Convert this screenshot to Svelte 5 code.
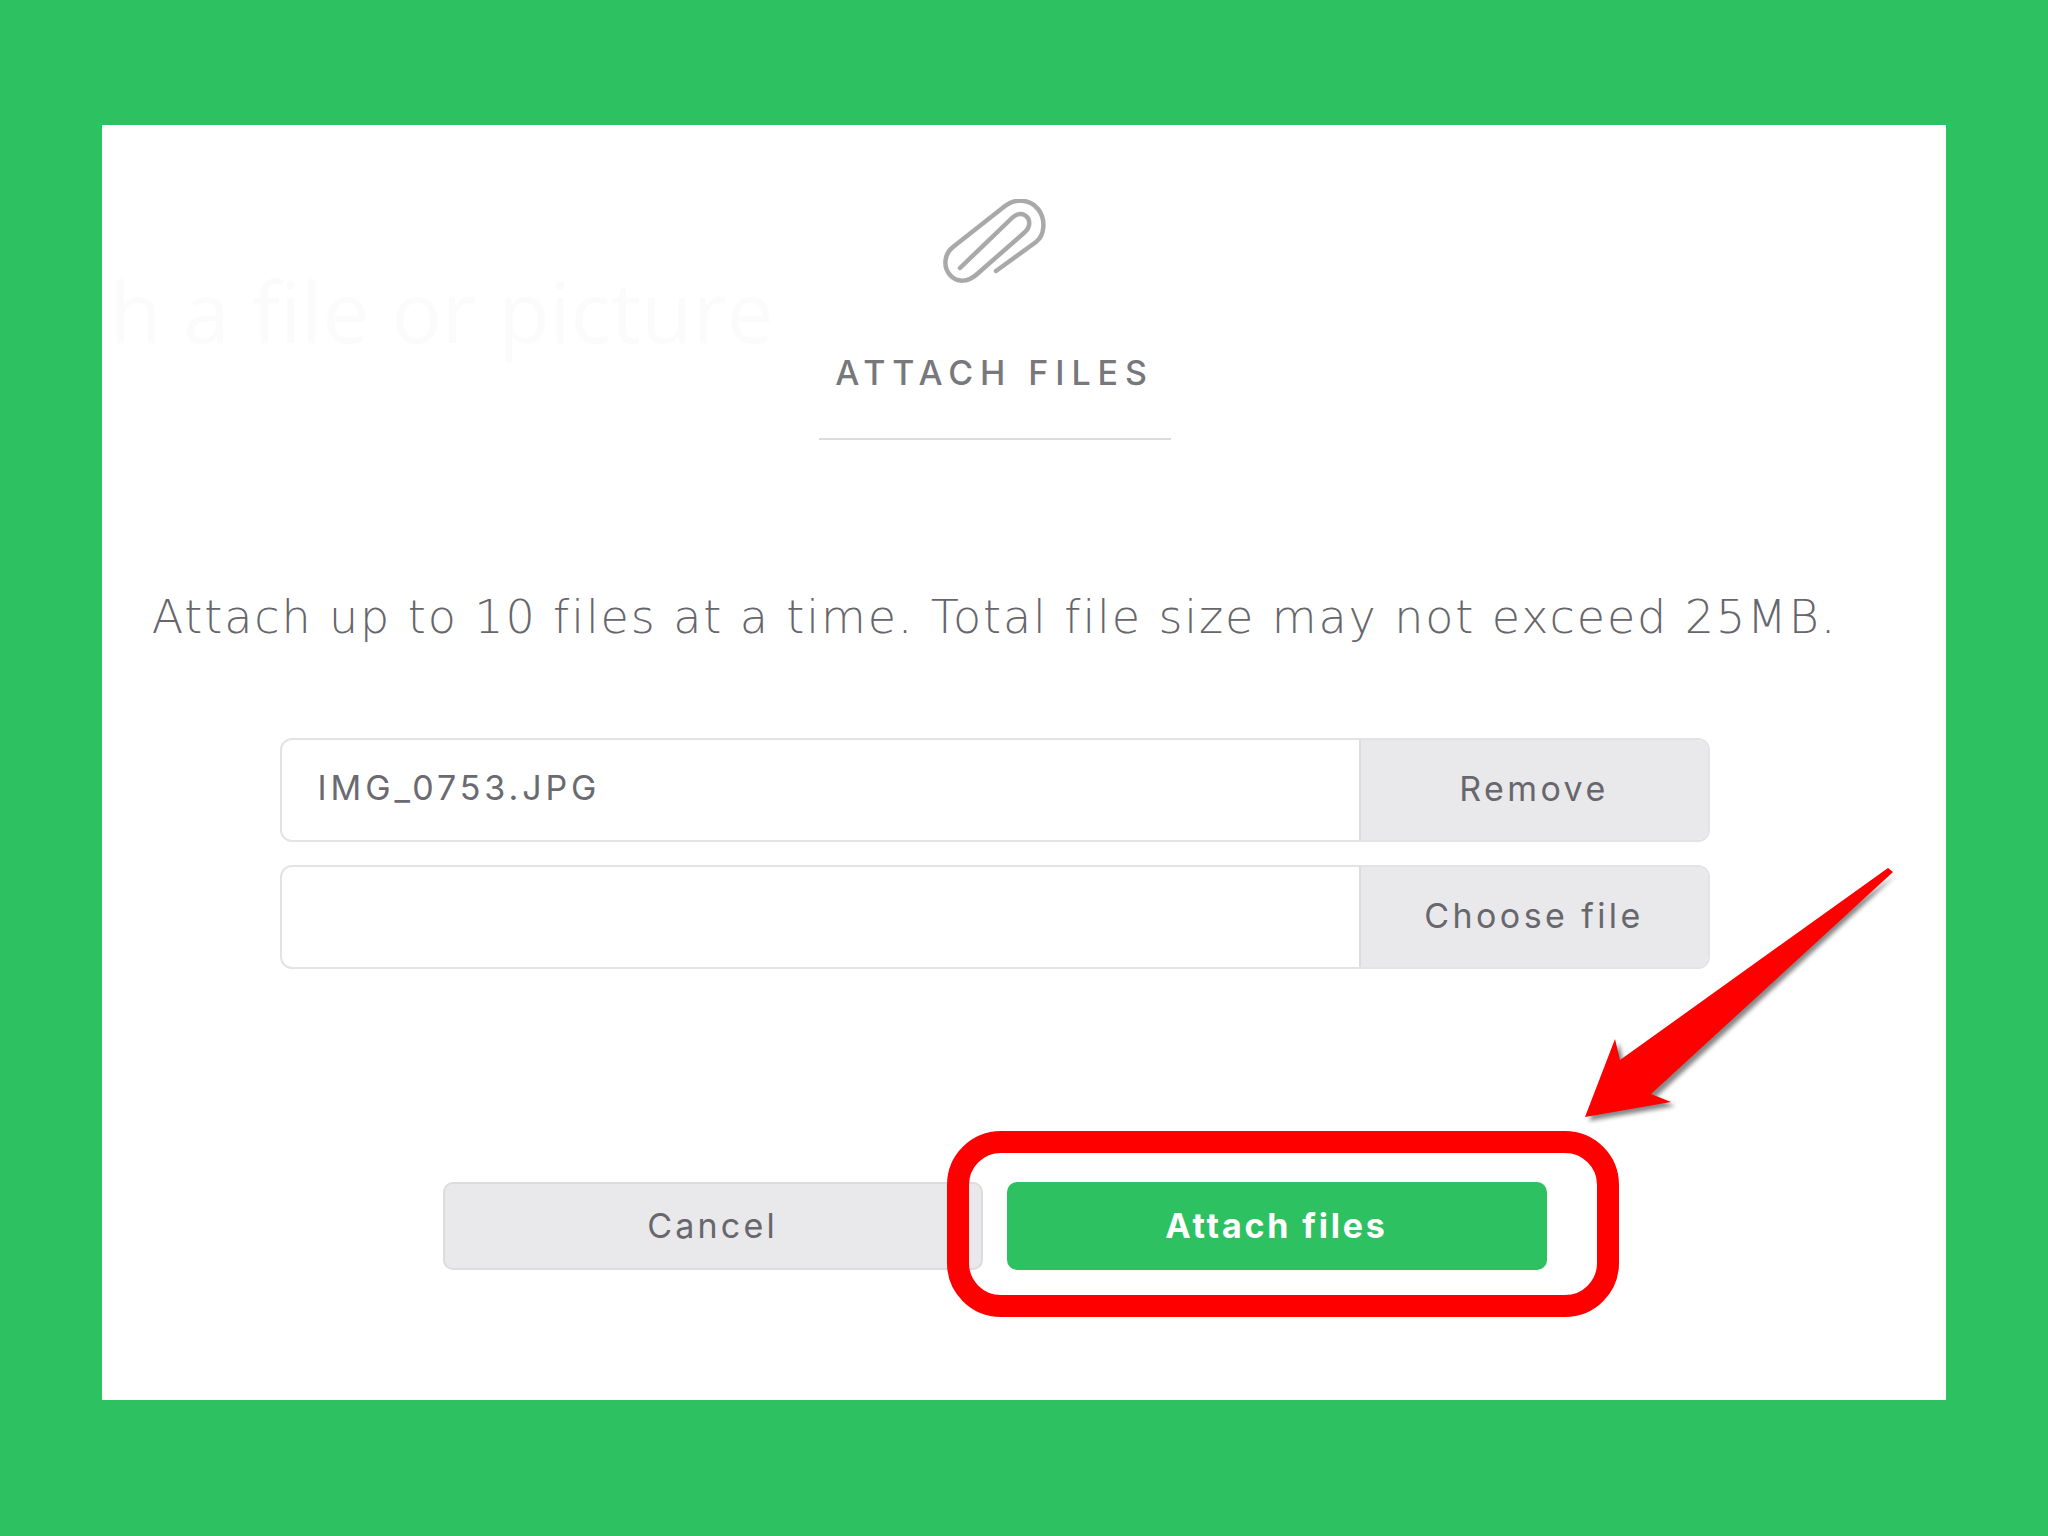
<script>
  const rows = [
    { name: 'IMG_0753.JPG', action: 'Remove' },
    { name: '', action: 'Choose file' }
  ];
</script>

<main class="page">
  <section class="panel">
    <span class="ghost" aria-hidden="true">h a file or picture</span>

    <header class="head">
      <svg class="clip" viewBox="0 0 104 86" width="104" height="86" fill="none" stroke="#a9a9a9" stroke-width="4.5" stroke-linecap="round" stroke-linejoin="round" aria-hidden="true">
        <path d="M53 72 L93 43 C102 36 103 20 95 10 C87 0 72 -1 62 7 L10 48 C1 55 0 68 7 76 C14 84 25 83 33 76 L82 33 C88 27 87 20 83 17 C79 14 74 15 70 18 L17 69" />
      </svg>
      <h1>ATTACH FILES</h1>
    </header>

    <p class="note">Attach up to 10 files at a time. Total file size may not exceed 25MB.</p>

    <div class="files">
      {#each rows as row}
        <div class="file-row">
          <div class="file-name">{row.name}</div>
          <button class="file-btn" type="button">{row.action}</button>
        </div>
      {/each}
    </div>

    <div class="actions">
      <button class="cancel" type="button">Cancel</button>
      <button class="attach" type="button">
        Attach files
        <span class="ring" aria-hidden="true"></span>
      </button>
    </div>

    <svg class="arrow" viewBox="0 0 330 270" width="330" height="270" aria-hidden="true">
      <defs>
        <filter id="soft" x="-10%" y="-10%" width="120%" height="120%">
          <feGaussianBlur stdDeviation="2" />
        </filter>
      </defs>
      <polygon class="arrow-shadow" filter="url(#soft)" points="316,15 75,238 95,246 9,261 39,183 44,204" />
      <polygon class="arrow-fill" points="308,8 313,12 71,234 91,242 5,257 35,179 40,200" />
    </svg>
  </section>
</main>

<style>
  :global(body) {
    margin: 0;
    background: #2ec162;
  }

  .page {
    box-sizing: border-box;
    width: 2048px;
    height: 1536px;
    padding: 125px 102px 136px;
    font-family: Inter, "Liberation Sans", sans-serif;
  }

  .panel {
    position: relative;
    box-sizing: border-box;
    width: 1844px;
    height: 1275px;
    padding: 74px 59px 0 0;
    background: #fff;
    display: flex;
    flex-direction: column;
    align-items: center;
    overflow: hidden;
  }

  /* page text faintly showing through the modal */
  .ghost {
    position: absolute;
    left: 8px;
    top: 131px;
    color: #fafbfa;
    font-family: "Open Sans", sans-serif;
    font-size: 84px;
    line-height: 110px;
    white-space: nowrap;
  }

  .head {
    position: relative;
    width: 352px;
    height: 241px;
    border-bottom: 2px solid #dcdcde;
    display: flex;
    flex-direction: column;
    align-items: center;
    box-sizing: border-box;
  }

  .clip {
    display: block;
  }

  h1 {
    margin: 66px 0 0;
    color: #77777c;
    font-size: 34px;
    font-weight: 500;
    line-height: 44px;
    letter-spacing: 6.9px;
    white-space: nowrap;
  }

  .note {
    position: relative;
    margin: 147px 0 0;
    color: #66666b;
    font-family: "DejaVu Sans", Inter, sans-serif;
    font-size: 46px;
    font-weight: 200;
    line-height: 60px;
    letter-spacing: 1.9px;
    white-space: nowrap;
  }

  .files {
    width: 1430px;
    margin-top: 91px;
    display: flex;
    flex-direction: column;
    gap: 23px;
  }

  .file-row {
    box-sizing: border-box;
    height: 104px;
    display: flex;
    border: 2px solid #e3e3e6;
    border-radius: 12px;
    overflow: hidden;
  }

  .file-name {
    flex: 1;
    padding-left: 36px;
    color: #6a6a70;
    font-size: 34px;
    line-height: 96px;
    letter-spacing: 3.9px;
  }

  .file-btn {
    width: 349px;
    padding: 0 0 4px;
    border: 0;
    border-left: 2px solid #dcdcdf;
    background: #e9e9eb;
    color: #67676d;
    font-family: inherit;
    font-size: 34px;
    letter-spacing: 3.4px;
  }

  .actions {
    width: 1104px;
    margin-top: 213px;
    display: flex;
    gap: 24px;
  }

  .cancel,
  .attach {
    width: 540px;
    height: 88px;
    padding: 0 0 2px;
    border-radius: 10px;
    font-family: inherit;
    font-size: 34px;
  }

  .cancel {
    box-sizing: border-box;
    border: 2px solid #dcdcdf;
    background: #e9e9eb;
    color: #67676d;
    letter-spacing: 3.2px;
  }

  .attach {
    position: relative;
    border: 0;
    background: #2ec162;
    color: #fff;
    font-weight: 700;
    letter-spacing: 2.8px;
  }

  /* annotation drawn over the buttons */
  .ring {
    position: absolute;
    left: -60px;
    top: -51px;
    width: 672px;
    height: 186px;
    box-sizing: border-box;
    border: 22px solid #fe0000;
    border-radius: 54px;
    pointer-events: none;
  }

  .arrow {
    position: absolute;
    left: 1478px;
    top: 735px;
  }

  .arrow-fill {
    fill: #fe0000;
  }

  .arrow-shadow {
    fill: #555;
    opacity: 0.7;
  }
</style>
